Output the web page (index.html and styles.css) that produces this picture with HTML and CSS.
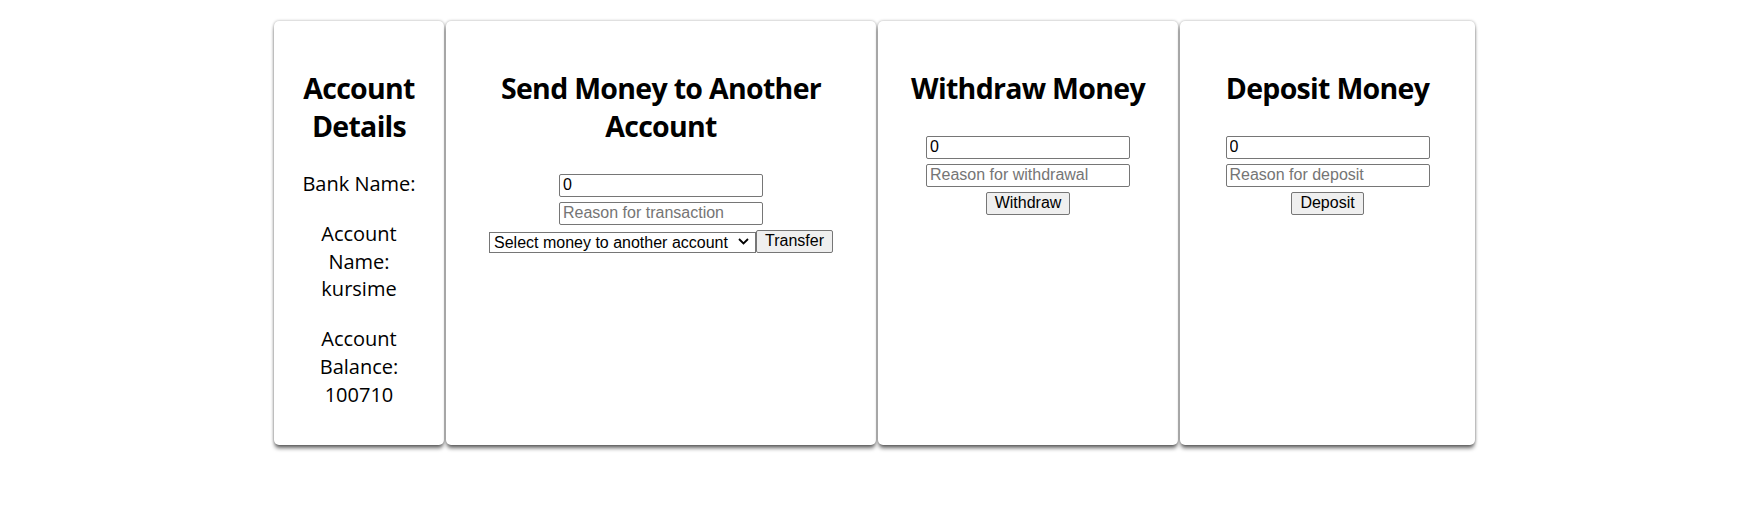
FILE: index.html
```html
<!DOCTYPE html>
<html lang="en">
<head>
<meta charset="utf-8">
<title>Bank Dashboard</title>
<link rel="stylesheet" href="styles.css">
</head>
<body>
<main class="dashboard">
  <section class="card card-details">
    <h2>Account Details</h2>
    <p>Bank Name:</p>
    <p>Account Name: kursime</p>
    <p>Account Balance: 100710</p>
  </section>
  <section class="card card-transfer">
    <h2>Send Money to Another Account</h2>
    <form class="form">
      <input class="field" type="text" value="0">
      <input class="field" type="text" placeholder="Reason for transaction">
      <div class="row">
        <span class="picker-wrap">
          <select class="picker"><option>Select money to another account</option></select>
          <svg class="chevron" width="11" height="7" viewBox="0 0 11 7" aria-hidden="true"><path d="M1 1 L5.5 5.5 L10 1" fill="none" stroke="#000" stroke-width="1.8"/></svg>
        </span><button class="btn" type="button">Transfer</button>
      </div>
    </form>
  </section>
  <section class="card card-withdraw">
    <h2>Withdraw Money</h2>
    <form class="form">
      <input class="field" type="text" value="0">
      <input class="field" type="text" placeholder="Reason for withdrawal">
      <button class="btn" type="button">Withdraw</button>
    </form>
  </section>
  <section class="card card-deposit">
    <h2>Deposit Money</h2>
    <form class="form">
      <input class="field" type="text" value="0">
      <input class="field" type="text" placeholder="Reason for deposit">
      <button class="btn" type="button">Deposit</button>
    </form>
  </section>
</main>
</body>
</html>
```
FILE: styles.css
```css
html, body {
  margin: 0;
  padding: 0;
  background: #ffffff;
}

body {
  font-family: "Open Sans", "Noto Sans", sans-serif;
  color: #000;
}

.dashboard {
  display: flex;
  justify-content: center;
  align-items: stretch;
  gap: 2px;
  padding: 21px 7px 12px 0;
}

.card {
  box-sizing: border-box;
  background: #fff;
  border-radius: 5px;
  box-shadow: 0 4px 4px -1px rgba(0, 0, 0, 0.6), 0 0 3px rgba(0, 0, 0, 0.35);
  padding: 23px 25px 14px;
  text-align: center;
}

.card-details { width: 170px; }
.card-transfer { width: 430px; }
.card-withdraw { width: 300px; }
.card-deposit { width: 295px; }

.card h2 {
  font-size: 28.5px;
  font-weight: 700;
  line-height: 38px;
  letter-spacing: -0.7px;
  margin: 25px 0;
}

.card p {
  font-size: 20px;
  line-height: 27.6px;
  margin: 22.5px 0;
}

.card h2 + p {
  margin-top: 0;
}

.form {
  display: flex;
  flex-direction: column;
  align-items: center;
  gap: 5px;
  padding-top: 3.5px;
  margin: 0;
}

.row {
  display: flex;
  align-items: center;
}

.field {
  box-sizing: border-box;
  width: 204px;
  height: 23px;
  margin: 0;
  padding: 1px 3px;
  border: 1px solid #767676;
  border-radius: 2px;
  font-family: "Liberation Sans", Arial, sans-serif;
  font-size: 16px;
  color: #000;
  background: #fff;
}

.field::placeholder {
  color: #757575;
}

.picker-wrap {
  position: relative;
  display: block;
  width: 267px;
  height: 21px;
}

.picker {
  box-sizing: border-box;
  width: 267px;
  height: 21px;
  margin: 0;
  padding: 0 20px 0 4px;
  border: 1px solid #767676;
  border-radius: 0;
  font-family: "Liberation Sans", Arial, sans-serif;
  font-size: 16px;
  color: #000;
  background-color: #fff;
  -webkit-appearance: none;
  appearance: none;
}

.chevron {
  position: absolute;
  right: 7px;
  top: 7px;
  pointer-events: none;
}

.btn {
  box-sizing: border-box;
  height: 23px;
  margin: 0;
  padding: 0 8px;
  border: 1px solid #767676;
  border-radius: 2px;
  background: #efefef;
  font-family: "Liberation Sans", Arial, sans-serif;
  font-size: 16px;
  color: #000;
  line-height: 1;
}
```
